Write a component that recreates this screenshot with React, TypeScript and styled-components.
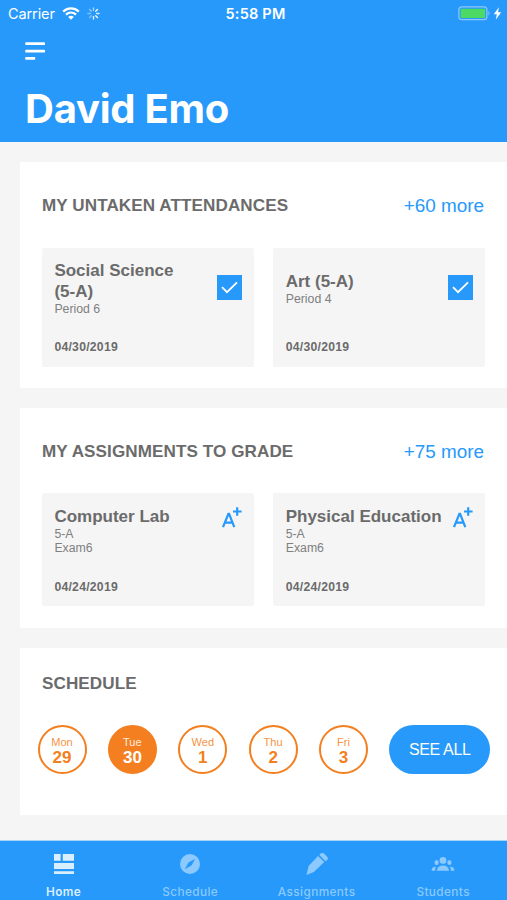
import React from "react";
import styled, { createGlobalStyle } from "styled-components";

const blue = "#2699fb";
const orange = "#f47f20";
const sans = '"Liberation Sans", Arial, sans-serif';
const ui = 'Inter, "Liberation Sans", sans-serif';

const GlobalStyle = createGlobalStyle`
  * { box-sizing: border-box; }
  body { margin: 0; background: #f5f5f5; font-family: ${sans}; color: #6b6b6b; }
`;

const Screen = styled.div`
  display: flex;
  flex-direction: column;
  width: 507px;
  height: 900px;
  overflow: hidden;
  background: #f5f5f5;
`;

const Header = styled.header`
  height: 142.4px;
  flex: none;
  background: ${blue};
  color: #fff;
`;

const StatusBar = styled.div`
  display: grid;
  grid-template-columns: 1fr auto 1fr;
  align-items: center;
  height: 27px;
  padding: 0 5px 0 8px;
  font: 400 14.5px/27px ${ui};
`;

const StatusGroup = styled.div<{ $end?: boolean }>`
  display: flex;
  align-items: center;
  justify-content: ${(p) => (p.$end ? "flex-end" : "flex-start")};
  gap: ${(p) => (p.$end ? "2px" : "7px")};
`;

const Carrier = styled.span`
  letter-spacing: -0.1px;
`;

const Clock = styled.span`
  font-weight: 600;
  font-size: 14.5px;
  letter-spacing: 0.2px;
  padding-left: 1px;
`;

const MenuButton = styled.button`
  display: block;
  margin: 15px 0 0 25px;
  padding: 0;
  border: 0;
  background: none;
  height: 19px;
  line-height: 0;
`;

const Name = styled.h1`
  margin: 23px 0 0 25px;
  font: 700 40px/50px ${ui};
  letter-spacing: -0.25px;
  white-space: nowrap;
`;

const Main = styled.main`
  display: flex;
  flex-direction: column;
  gap: 20px;
  flex: 1;
  padding: 20px 0 0 20px;
`;

const Section = styled.section<{ $height: number }>`
  height: ${(p) => p.$height}px;
  flex: none;
  padding: 0 22px;
  background: #fff;
`;

const SectionHead = styled.div<{ $height: number; $drop?: number; $lift?: number }>`
  display: flex;
  align-items: center;
  justify-content: space-between;
  height: ${(p) => p.$height}px;
  padding-right: 1px;
  padding-top: ${(p) => p.$drop ?? 1.5}px;
  padding-bottom: ${(p) => p.$lift ?? 0}px;
`;

const SectionTitle = styled.h2`
  margin: 0;
  font-size: 17.1px;
  line-height: 20px;
  font-weight: 700;
  letter-spacing: 0.08px;
`;

const More = styled.a`
  font-size: 18.9px;
  line-height: 22px;
  color: ${blue};
`;

const Cards = styled.div`
  display: grid;
  grid-template-columns: 1fr 1fr;
  gap: 19.6px;
  width: 443px;
`;

const Card = styled.article<{ $height: number; $bottom: number }>`
  display: flex;
  flex-direction: column;
  justify-content: space-between;
  height: ${(p) => p.$height}px;
  padding: 13px 12px ${(p) => p.$bottom}px 12.4px;
  background: #f5f5f5;
  border-radius: 2px;
`;

const CardTop = styled.div<{ $height: number }>`
  display: flex;
  align-items: center;
  justify-content: space-between;
  height: ${(p) => p.$height}px;
`;

const CardTitle = styled.h3<{ $narrow?: boolean }>`
  margin: 0;
  width: ${(p) => (p.$narrow ? "135px" : "auto")};
  font-size: 17px;
  line-height: 20.5px;
  font-weight: 700;
  white-space: ${(p) => (p.$narrow ? "normal" : "nowrap")};
`;

const Detail = styled.div`
  font-size: 12.3px;
  line-height: 14.3px;
  color: #808080;
`;

const DateText = styled.time`
  font-size: 12.2px;
  line-height: 15px;
  font-weight: 700;
  letter-spacing: 0.26px;
`;

const Check = styled.span`
  display: grid;
  place-items: center;
  width: 25px;
  height: 25px;
  margin-bottom: 2px;
  background: ${blue};
`;

const Grade = styled.span`
  align-self: flex-start;
  line-height: 0;
  margin-top: 0.7px;
  margin-left: -10px;
`;

const Days = styled.div`
  display: flex;
  gap: 21.4px;
  width: max-content;
  margin-left: -4.5px;
`;

const Day = styled.button<{ $active?: boolean }>`
  display: flex;
  flex-direction: column;
  align-items: center;
  width: 49px;
  height: 49px;
  padding: 8px 0 0;
  border: 2px solid ${orange};
  border-radius: 50%;
  background: ${(p) => (p.$active ? orange : "#fff")};
  color: ${(p) => (p.$active ? "#fff" : orange)};
  font-family: ${sans};
`;

const Weekday = styled.span`
  font-size: 11px;
  line-height: 14px;
  letter-spacing: 0.1px;
  opacity: 0.85;
`;

const DayNumber = styled.span`
  font-size: 17px;
  line-height: 18px;
  font-weight: 700;
`;

const SeeAll = styled.button`
  width: 100.5px;
  height: 49px;
  padding: 0;
  border: 0;
  border-radius: 24.5px;
  background: ${blue};
  color: #fff;
  font: 400 16px/49px ${sans};
  letter-spacing: -0.35px;
`;

const TabBar = styled.nav`
  display: grid;
  grid-template-columns: repeat(4, 126.5px);
  flex: none;
  height: 60.5px;
  padding-left: 0.4px;
  border-top: 1px solid #a5d5f7;
  background: ${blue};
`;

const Tab = styled.a<{ $active?: boolean }>`
  display: flex;
  flex-direction: column;
  align-items: center;
  padding-top: 12px;
  color: ${(p) => (p.$active ? "#d9efff" : "#8bc9ff")};
  font: ${(p) => (p.$active ? 600 : 500)} 11.8px/14px ${ui};
  letter-spacing: 0.4px;
  gap: 10px;
`;

const WifiIcon = () => (
  <svg width="18" height="13" viewBox="0 0 18 13" fill="none" stroke="#fff" strokeWidth="2.2">
    <path d="M1.2 4.6C5.7.4 12.3.4 16.8 4.6" />
    <path d="M4 7.6c3-2.6 7-2.6 10 0" />
    <path d="M9 12.7 6.2 9.9c1.6-1.4 4-1.4 5.6 0z" fill="#fff" stroke="none" />
  </svg>
);

const SPOKES = [0.6, 0.9, 0.8, 0.95, 0.9, 0.4, 0.4, 0.45];
const SpinnerIcon = () => (
  <svg width="13" height="13" viewBox="-6.5 -6.5 13 13" stroke="#fff" strokeWidth="1.4" strokeLinecap="round">
    {SPOKES.map((o, i) => (
      <path key={i} d="M0-3.1v-2.5" opacity={o} transform={`rotate(${i * 45})`} />
    ))}
  </svg>
);

const BatteryIcon = () => (
  <svg width="33" height="15" viewBox="0 0 33 15">
    <rect x=".9" y=".9" width="28" height="12.8" rx="3" fill="none" stroke="#8dc8fb" strokeWidth="1.2" />
    <rect x="2.6" y="2.7" width="24.6" height="9.4" rx="1" fill="#4cd964" />
    <path d="M30.5 5c1.3.5 1.3 4.2 0 4.7z" fill="#8dc8fb" />
  </svg>
);

const BoltIcon = () => (
  <svg width="9" height="13" viewBox="0 0 8 12" fill="#fff">
    <path d="M5.3.2.5 6.8h2.9l-1 4.9 5-6.8H4.5z" />
  </svg>
);

const MenuIcon = () => (
  <svg width="20" height="19" viewBox="0 0 20 19" fill="#fff">
    <rect x=".3" y=".2" width="19.7" height="2.8" rx=".5" />
    <rect x=".3" y="7.7" width="19.7" height="2.8" rx=".5" />
    <rect x=".3" y="15" width="9.9" height="2.8" rx=".5" />
  </svg>
);

const CheckIcon = () => (
  <svg width="17" height="13" viewBox="0 0 17 13" fill="none" stroke="#fff" strokeWidth="1.8">
    <path d="m1 6.2 5 5L16 1.3" />
  </svg>
);

const GradeIcon = () => (
  <svg width="21" height="22" viewBox="0 0 21 22" fill="none" stroke={blue} strokeWidth="2.2">
    <path d="m2 20.2 5.4-13.3h.7l5.2 13.3M4 15.7h7.6" />
    <path d="M16.2.2v8.6M12 4.5h8.6" />
  </svg>
);

const HomeIcon = () => (
  <svg width="22" height="22" viewBox="0 0 22 22" fill="currentColor">
    <path d="M1 1h6.6v6.8H1zM9.8 1H21v6.8H9.8zM1 10h20v5.9H1zM1 18.3h20V21H1z" />
  </svg>
);

const CompassIcon = () => (
  <svg width="22" height="22" viewBox="0 0 22 22">
    <circle cx="11" cy="11" r="10" fill="currentColor" />
    <path d="m16.3 5.7-3.9 6.7-6.7 3.9 3.9-6.7z" fill={blue} />
  </svg>
);

const PencilIcon = () => (
  <svg width="24" height="22" viewBox="0 0 24 22" fill="currentColor">
    <path d="M13 2.9 19.2 8.9 8.9 19.1 1.4 22l2.2-9zM14.3 1.9 15.7.6c1-1 2.3-1 3.3 0l3.2 3.2c1 1 1 2.1 0 3.1l-1.7 1.3z" />
  </svg>
);

const StudentsIcon = () => (
  <svg width="24" height="22" viewBox="0 0 24 22" fill="currentColor">
    <circle cx="12" cy="7.4" r="3.4" />
    <ellipse cx="5.6" cy="9.4" rx="2.1" ry="2.5" />
    <ellipse cx="18.4" cy="9.4" rx="2.1" ry="2.5" />
    <path d="M6 17.7c.2-7 11.8-7 12 0zM.6 17.7c-.1-2.6 1.7-4.3 4.6-3.9-.8 1-1 2.4-1 3.9zM23.4 17.7c.1-2.6-1.7-4.3-4.6-3.9.8 1 1 2.4 1 3.9z" />
  </svg>
);

const attendances = [
  { title: "Social Science (5-A)", period: "Period 6", date: "04/30/2019" },
  { title: "Art (5-A)", period: "Period 4", date: "04/30/2019" },
];
const assignments = ["Computer Lab", "Physical Education"];
const days: [string, number][] = [["Mon", 29], ["Tue", 30], ["Wed", 1], ["Thu", 2], ["Fri", 3]];
const tabs = [
  { label: "Home", Icon: HomeIcon },
  { label: "Schedule", Icon: CompassIcon },
  { label: "Assignments", Icon: PencilIcon },
  { label: "Students", Icon: StudentsIcon },
];

export default function App() {
  return (
    <Screen>
      <GlobalStyle />
      <Header>
        <StatusBar>
          <StatusGroup>
            <Carrier>Carrier</Carrier>
            <WifiIcon />
            <SpinnerIcon />
          </StatusGroup>
          <Clock>5:58 PM</Clock>
          <StatusGroup $end>
            <BatteryIcon />
            <BoltIcon />
          </StatusGroup>
        </StatusBar>
        <MenuButton aria-label="Menu"><MenuIcon /></MenuButton>
        <Name>David Emo</Name>
      </Header>
      <Main>
        <Section $height={225.6}>
          <SectionHead $height={85.6}>
            <SectionTitle>MY UNTAKEN ATTENDANCES</SectionTitle>
            <More>+60 more</More>
          </SectionHead>
          <Cards>
            {attendances.map((a) => (
              <Card key={a.title} $height={119} $bottom={12}>
                <CardTop $height={56}>
                  <div>
                    <CardTitle $narrow>{a.title}</CardTitle>
                    <Detail>{a.period}</Detail>
                  </div>
                  <Check><CheckIcon /></Check>
                </CardTop>
                <DateText>{a.date}</DateText>
              </Card>
            ))}
          </Cards>
        </Section>
        <Section $height={220.4}>
          <SectionHead $height={85.2} $drop={3}>
            <SectionTitle>MY ASSIGNMENTS TO GRADE</SectionTitle>
            <More>+75 more</More>
          </SectionHead>
          <Cards>
            {assignments.map((title) => (
              <Card key={title} $height={113} $bottom={11}>
                <CardTop $height={50}>
                  <div>
                    <CardTitle>{title}</CardTitle>
                    <Detail>5-A</Detail>
                    <Detail>Exam6</Detail>
                  </div>
                  <Grade><GradeIcon /></Grade>
                </CardTop>
                <DateText>04/24/2019</DateText>
              </Card>
            ))}
          </Cards>
        </Section>
        <Section $height={167}>
          <SectionHead $height={76.8} $lift={7}>
            <SectionTitle>SCHEDULE</SectionTitle>
          </SectionHead>
          <Days>
            {days.map(([name, n]) => (
              <Day key={name} $active={n === 30}>
                <Weekday>{name}</Weekday>
                <DayNumber>{n}</DayNumber>
              </Day>
            ))}
            <SeeAll>SEE ALL</SeeAll>
          </Days>
        </Section>
      </Main>
      <TabBar>
        {tabs.map(({ label, Icon }, i) => (
          <Tab key={label} $active={i === 0}>
            <Icon />
            {label}
          </Tab>
        ))}
      </TabBar>
    </Screen>
  );
}
